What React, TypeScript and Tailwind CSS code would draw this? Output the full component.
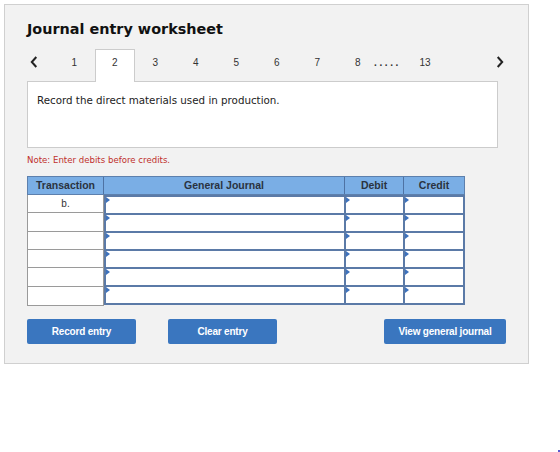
import React from "react";

const verdana = { fontFamily: '"DejaVu Sans", Verdana, sans-serif' };
const arial = { fontFamily: '"Liberation Sans", Arial, sans-serif' };

function Tri() {
  return (
    <span className="absolute left-0 top-0 w-0 h-0 border-t-[3px] border-b-[3px] border-l-[4px] border-t-transparent border-b-transparent border-l-[#3d72bd]" />
  );
}

function InputColumn({ w, first }: { w: string; first?: boolean }) {
  return (
    <div className={`flex flex-col ${w} ${first ? "" : "-ml-[2px]"}`}>
      {[0, 1, 2, 3, 4, 5].map((i) => (
        <div
          key={i}
          className={`relative h-[20px] border-2 border-[#5b7aa7] bg-white ${i === 0 ? "" : "-mt-[2px]"}`}
        >
          <Tri />
        </div>
      ))}
    </div>
  );
}

export default function App() {
  const tabs = ["1", "2", "3", "4", "5", "6", "7", "8"];
  const rows = ["b.", "", "", "", "", ""];
  return (
    <div className="w-[560px] h-[452px] bg-white p-[4px] relative" style={arial}>
      <div className="w-[525px] h-[360px] bg-[#f2f2f2] border border-[#d0d0d0] pl-[22px] pt-[15px]">
        <div className="text-[14.4px] font-bold text-[#111] leading-[18px]" style={verdana}>
          Journal entry worksheet
        </div>
        {/* tabs */}
        <div className="flex items-stretch h-[32px] mt-[11px] text-[10px] text-[#333]">
          <div className="w-[27px] flex items-center pl-[3px] pb-[7px]">
            <svg width="8" height="12" viewBox="0 0 8 12">
              <path d="M6.3 1 L1.8 6 L6.3 11" stroke="#222" strokeWidth="2" fill="none" />
            </svg>
          </div>
          {tabs.map((t, i) => (
            <div
              key={t}
              className={`w-[40.5px] flex items-center justify-center ${
                i === 1
                  ? "bg-white border border-b-0 border-[#cccccc] relative z-10 -mb-[1px] pb-[8px]"
                  : "pb-[6px]"
              }`}
            >
              {t}
            </div>
          ))}
          <div className="w-[26px] -ml-[4px] flex items-center pb-[6px] font-bold tracking-[2.6px] text-[#333]">.....</div>
          <div className="w-[50px] flex items-center justify-center pb-[6px]">13</div>
          <div className="w-[54px] flex items-center justify-end pb-[7px]">
            <svg width="8" height="12" viewBox="0 0 8 12">
              <path d="M1.7 1 L6.2 6 L1.7 11" stroke="#222" strokeWidth="2" fill="none" />
            </svg>
          </div>
        </div>
        {/* question box */}
        <div className="w-[471px] h-[67px] bg-white border border-[#cccccc] pl-[9px] pt-[11px]">
          <div className="text-[10.3px] text-[#222] leading-[14px]" style={verdana}>
            Record the direct materials used in production.
          </div>
        </div>
        <div className="mt-[6px] text-[8.6px] leading-[12px] text-[#c0302b]" style={verdana}>
          Note: Enter debits before credits.
        </div>
        {/* table */}
        <div className="mt-[10px] w-[438px]">
          <div className="flex h-[19px] bg-[#7aaee5] border border-[#5d80ad] text-[10.5px] font-bold text-[#2a3340]">
            <div className="w-[76px] flex items-center justify-center border-r border-[#4e72a3]">Transaction</div>
            <div className="w-[241px] flex items-center justify-center border-r border-[#4e72a3]">General Journal</div>
            <div className="w-[59px] flex items-center justify-center border-r border-[#4e72a3]">Debit</div>
            <div className="flex-1 flex items-center justify-center">Credit</div>
          </div>
          <div className="flex">
            <div className="w-[77px] flex flex-col border-l border-r border-[#9a9a9a] bg-white">
              {rows.map((r, i) => (
                <div
                  key={i}
                  className={`h-[18.33px] ${i === 5 ? "h-[19px]" : ""} border-b border-[#9a9a9a] flex items-center justify-center text-[10px] text-[#333]`}
                >
                  {r}
                </div>
              ))}
            </div>
            <InputColumn w="w-[242px]" first />
            <InputColumn w="w-[61px]" />
            <InputColumn w="w-[62px]" />
          </div>
        </div>
        {/* buttons */}
        <div className="flex mt-[13px] text-[10px] font-bold text-white tracking-[-0.2px]">
          <div className="w-[109px] h-[25px] bg-[#3a76bf] rounded-[2px] flex items-center justify-center">
            Record entry
          </div>
          <div className="w-[109px] h-[25px] ml-[32px] bg-[#3a76bf] rounded-[2px] flex items-center justify-center">
            Clear entry
          </div>
          <div className="w-[122px] h-[25px] ml-[107px] bg-[#3a76bf] rounded-[2px] flex items-center justify-center">
            View general journal
          </div>
        </div>
      </div>
      <div className="absolute right-0 bottom-0 w-[2px] h-[2px] bg-[#5a5ad0]" />
    </div>
  );
}
